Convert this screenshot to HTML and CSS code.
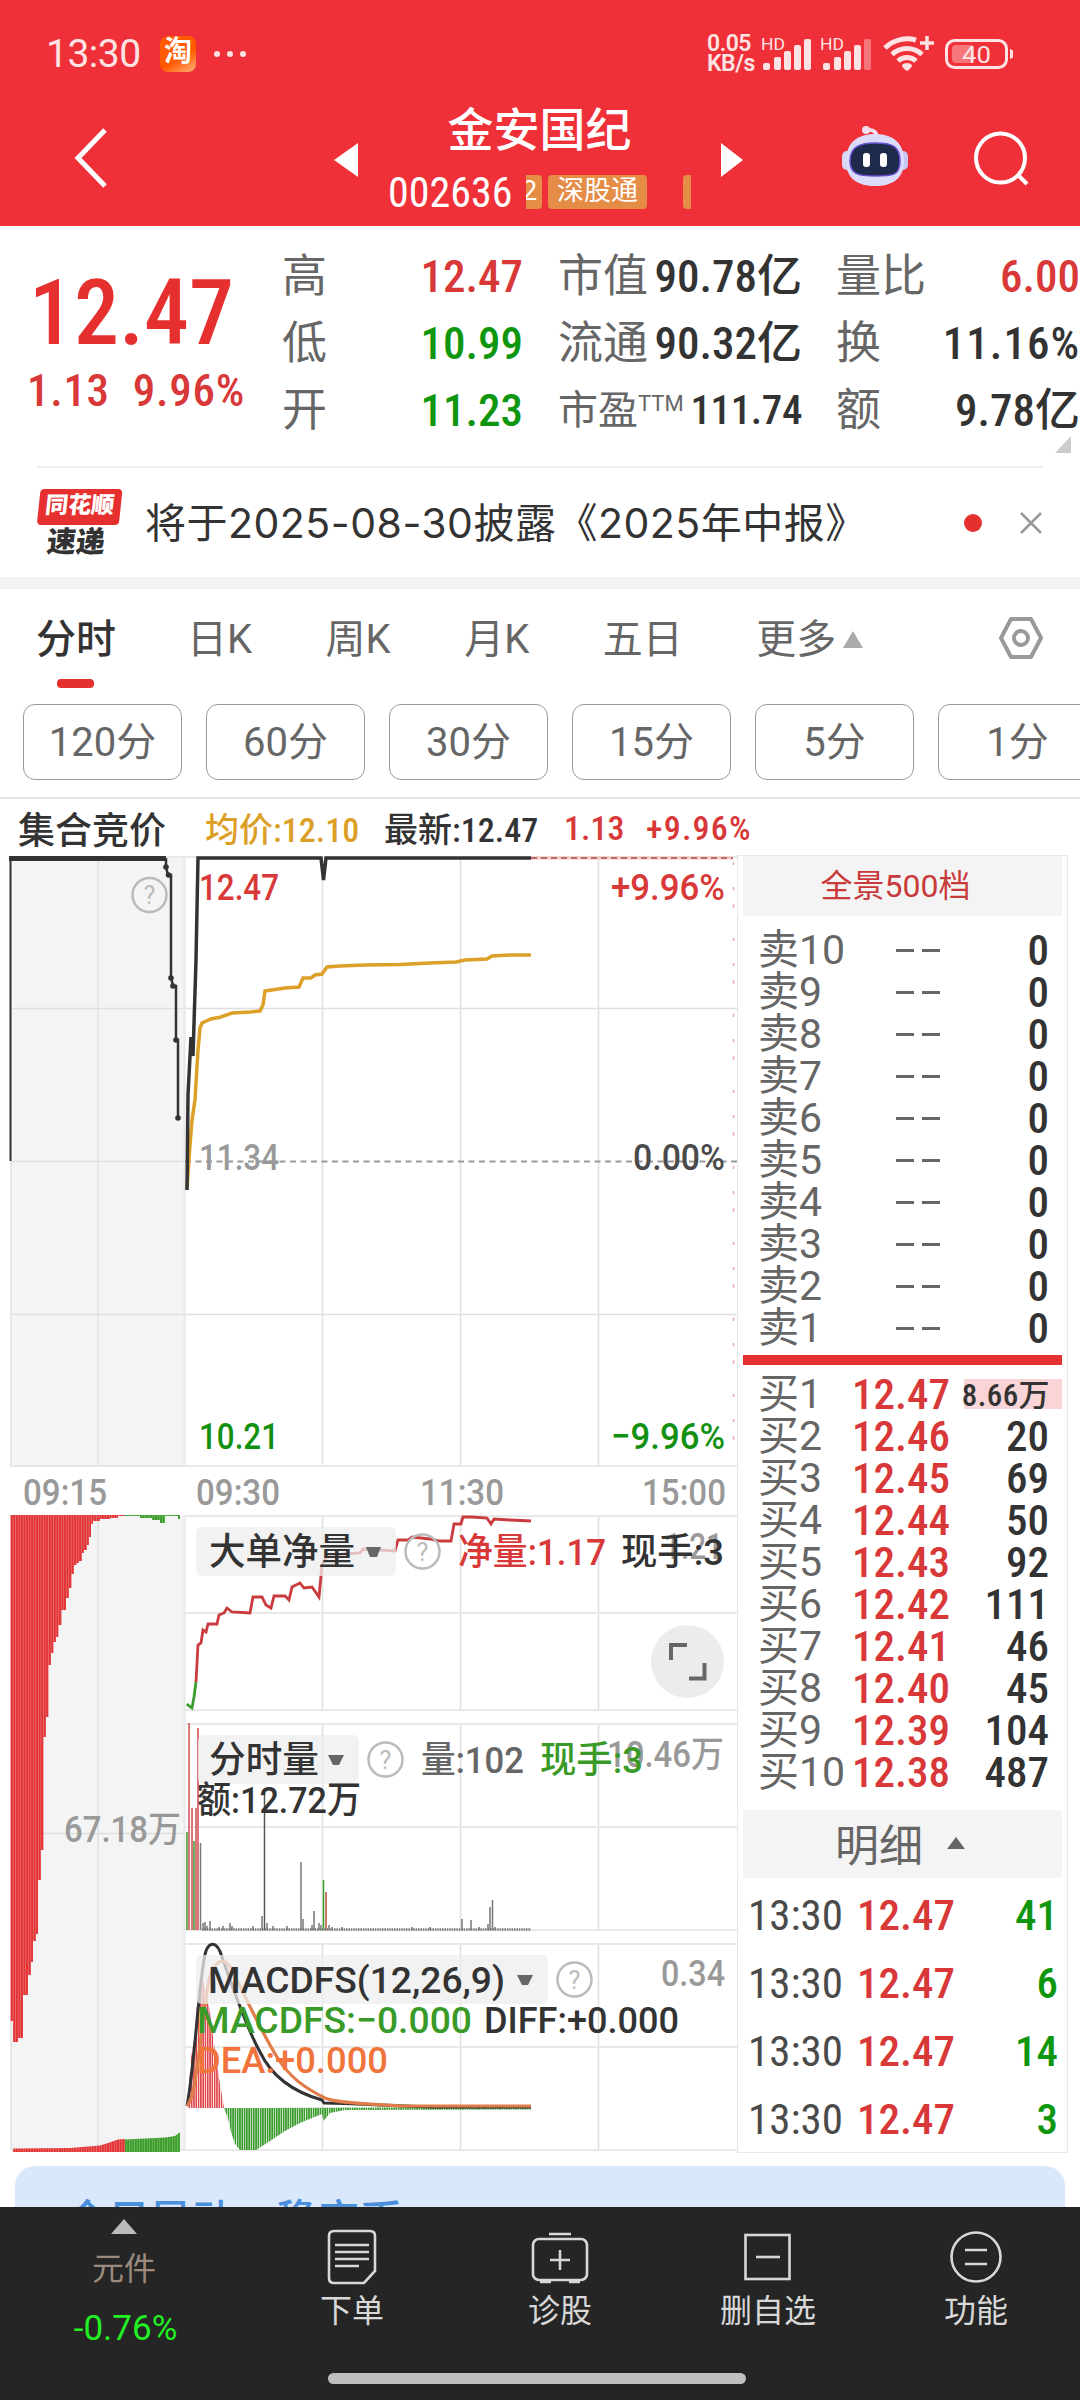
FILE: index.html
```html
<!DOCTYPE html>
<html lang="zh-CN">
<head>
    <meta charset="UTF-8">
    <title>金安国纪 002636</title>
    <link rel="stylesheet" href="styles.css">
</head>
<body>
    <header class="top">
        <div class="status">
            <span class="clock">13:30</span>
            <span class="app-icon">淘</span>
            <span class="more"><i></i><i></i><i></i></span>
            <span class="speed">0.05<br>KB/s</span>
            <svg class="signals" width="254" height="40" viewBox="759 34 254 40">
                <g fill="#fde3e3">
                    <text x="761" y="50" font-size="16" textLength="24" lengthAdjust="spacingAndGlyphs">HD</text>
                    <text x="820" y="50" font-size="16" textLength="24" lengthAdjust="spacingAndGlyphs">HD</text>
                    <rect x="763" y="63" width="7" height="7" rx="2"/>
                    <rect x="774" y="57" width="7" height="13" rx="2"/>
                    <rect x="784" y="51" width="7" height="19" rx="2"/>
                    <rect x="794" y="45" width="7" height="25" rx="2"/>
                    <rect x="804" y="39" width="7" height="31" rx="2"/>
                    <rect x="823" y="63" width="7" height="7" rx="2"/>
                    <rect x="834" y="57" width="7" height="13" rx="2"/>
                    <rect x="844" y="51" width="7" height="19" rx="2"/>
                    <rect x="854" y="45" width="7" height="25" rx="2"/>
                    <rect x="864" y="39" width="7" height="31" rx="2" opacity=".4"/>
                    <path d="M902 65a7 7 0 0 1 10 0q0 3-5 6-5-3-5-6z"/>
                    <rect x="952" y="45" width="22" height="18" rx="4" opacity=".4"/>
                    <path d="M1010 49q4 1 4 5t-4 5z"/>
                    <text x="962" y="63" font-size="24" textLength="29" lengthAdjust="spacingAndGlyphs">40</text>
                </g>
                <g fill="none" stroke="#fde3e3">
                    <path d="M885 48a32 32 0 0 1 31-8M892 54.500a22 22 0 0 1 30 0M898 61a13.500 13.500 0 0 1 18 0" stroke-width="5"/>
                    <path d="M920 43h14M927 36v14" stroke-width="3.500"/>
                    <rect x="946.500" y="40.500" width="60" height="27" rx="8" stroke-width="3"/>
                </g>
            </svg>
        </div>
        <div class="title-bar">
            <svg class="back" width="40" height="64" viewBox="0 0 40 64"><path d="M35 3 8 31l27 28" fill="none" stroke="#fff" stroke-width="5"/></svg>
            <svg class="prev" width="24" height="34" viewBox="0 0 24 34"><path d="M24 0v34L0 17z" fill="#fff"/></svg>
            <div class="stock">
                <h1>金安国纪</h1>
                <div class="code-row">
                    <span class="code num">002636</span>
                    <span class="tag tag-cut">2</span>
                    <span class="tag">深股通</span>
                    <span class="tag tag-next"></span>
                </div>
            </div>
            <svg class="next" width="24" height="34" viewBox="0 0 24 34"><path d="M0 0v34l22-17z" fill="#fff"/></svg>
            <svg class="robot" width="68" height="64" viewBox="0 0 68 64">
                <path d="M24 5q10-1 11 6" fill="none" stroke="#f0dff0" stroke-width="3.500"/>
                <circle cx="24" cy="5" r="4" fill="#f0dff0"/>
                <rect x="0" y="26" width="10" height="19" rx="5" fill="#d9d6f6"/>
                <rect x="56" y="26" width="10" height="19" rx="5" fill="#c9c8f2"/>
                <path d="M33 9c18 0 29 9 29 27S50 61 33 61 4 54 4 36 15 9 33 9z" fill="#dcdcfa"/>
                <path d="M33 18c17 0 25 3 25 18S50 51 33 51 8 49 8 36 16 18 33 18z" fill="#1d2a4a" stroke="#6a4fd0" stroke-width="1.500"/>
                <rect x="21" y="28" width="7" height="14" rx="3" fill="#fff"/>
                <rect x="38" y="28" width="7" height="14" rx="3" fill="#fff"/>
            </svg>
            <svg class="search" width="60" height="60" viewBox="0 0 60 60"><g fill="none" stroke="#fff" stroke-width="4"><circle cx="28.500" cy="29" r="24.500"/><path d="M46 46l9 9"/></g></svg>
        </div>
    </header>

    <section class="quote">
        <div class="price">
            <div class="last num">12.47</div>
            <div class="change num"><span>1.13</span><span>9.96%</span></div>
        </div>
        <dl class="col col-a">
            <div><dt>高</dt><dd class="num red">12.47</dd></div>
            <div><dt>低</dt><dd class="num green">10.99</dd></div>
            <div><dt>开</dt><dd class="num green">11.23</dd></div>
        </dl>
        <dl class="col col-b">
            <div><dt>市值</dt><dd class="num">90.78亿</dd></div>
            <div><dt>流通</dt><dd class="num">90.32亿</dd></div>
            <div class="small"><dt>市盈<sup>TTM</sup></dt><dd class="num">111.74</dd></div>
        </dl>
        <dl class="col col-c">
            <div><dt>量比</dt><dd class="num red">6.00</dd></div>
            <div><dt>换</dt><dd class="num wide">11.16%</dd></div>
            <div><dt>额</dt><dd class="num">9.78亿</dd></div>
        </dl>
        <i class="corner"></i>
    </section>

    <section class="news">
        <div class="news-logo"><b>同花顺</b><em>速递</em></div>
        <p>将于2025-08-30披露《2025年中报》</p>
        <i class="dot"></i>
        <svg width="24" height="24" viewBox="0 0 24 24"><path d="M2 2l20 20M22 2 2 22" stroke="#999" stroke-width="2.500"/></svg>
    </section>

    <nav class="tabs">
        <span class="active">分时</span>
        <span>日K</span>
        <span>周K</span>
        <span>月K</span>
        <span>五日</span>
        <span>更多<i class="up"></i></span>
        <svg width="46" height="44" viewBox="0 0 46 44"><g fill="none" stroke="#999" stroke-width="4"><path d="M13 3h20l10 19-10 19H13L3 22z" stroke-linejoin="round"/><circle cx="23" cy="22" r="7"/></g></svg>
    </nav>
    <div class="periods">
        <span>120分</span><span>60分</span><span>30分</span><span>15分</span><span>5分</span><span>1分</span>
    </div>

    <div class="info">
        <b>集合竞价</b>
        <span class="avg num">均价:12.10</span>
        <span class="now num">最新:12.47</span>
        <span class="diff num">1.13</span>
        <span class="rate num">+9.96%</span>
    </div>

    <main class="board">
        <svg class="charts" width="737" height="1305" viewBox="0 850 737 1305">
            <defs>
                <pattern id="redBars" width="2.530" height="10" patternUnits="userSpaceOnUse"><rect width="2.530" height="10" fill="#e23336"/><rect width=".6" height="10" fill="#ee827e"/></pattern>
                <pattern id="greenBars" width="2.530" height="10" patternUnits="userSpaceOnUse"><rect width="2.530" height="10" fill="#3a9a2c"/><rect width=".7" height="10" fill="#7cc46c"/></pattern>
                <pattern id="redThin" width="2.300" height="10" patternUnits="userSpaceOnUse"><rect width="1.600" height="10" fill="#df474c"/></pattern>
                <pattern id="greenThin" width="2.300" height="10" patternUnits="userSpaceOnUse"><rect width="1.700" height="10" fill="#379a2a"/></pattern>
                <g id="help"><circle r="17" fill="none" stroke="#bbb" stroke-width="2.500"/><text y="9" font-size="25" text-anchor="middle" fill="#bbb">?</text></g>
            </defs>

            <!-- panels and grid -->
            <rect x="11" y="857" width="173" height="609" fill="#f4f4f4"/>
            <rect x="11" y="1516" width="173" height="635" fill="#f4f4f4"/>
            <g fill="none" stroke="#dfdfdf" stroke-width="1.500">
                <path d="M98 857V1466M98 1516V2150M11 1008.500H737M11 1161.500H184M11 1314.500H737M11 1833.500H184"/>
                <path d="M322.500 857V1466M460.500 857V1466M598.500 857V1466M322.500 1516V1710M460.500 1516V1710M598.500 1516V1710M322.500 1724V1930M460.500 1724V1930M598.500 1724V1930M322.500 1944V2150M460.500 1944V2150M598.500 1944V2150"/>
            </g>
            <g fill="none" stroke="#e8e8e8" stroke-width="2">
                <path d="M11 857H737M11 857V1466H737M184.500 857V1466M11 1516V2150M184.500 1516V2150"/>
                <path d="M184 1516H737M184 1613H737M184 1710H737M184 1724H737M184 1827H737M184 1930H737M184 1944H737M184 2047H737M11 2150H737"/>
            </g>

            <!-- call auction -->
            <path d="M10.500 1161V858" stroke="#333" stroke-width="2"/>
            <path d="M9 858.500H166" stroke="#333" stroke-width="5"/>
            <path d="M166 858V867L168 875H171V977L173 986H176V1040H178V1118" fill="none" stroke="#333" stroke-width="2.500"/>
            <g fill="#333"><circle cx="166" cy="867" r="2.800"/><circle cx="168.500" cy="875" r="2.800"/><circle cx="171" cy="978" r="2.800"/><circle cx="173" cy="986" r="2.800"/><circle cx="176" cy="1040" r="2.800"/><circle cx="178" cy="1118" r="2.800"/></g>
            <use href="#help" x="149.500" y="895"/>

            <!-- price line -->
            <path d="M531 858H733" stroke="#f3c4c4" stroke-width="3"/>
            <path d="M531 858H733" stroke="#c06a66" stroke-width="1.800" stroke-dasharray="6 4"/>
            <path d="M733.500 862V1466" stroke="#eba9ab" stroke-width="1.500" stroke-dasharray="3 22 3 14 4 30"/>
            <path d="M185 1161.500H737" stroke="#999" stroke-width="2" stroke-dasharray="6 4.500"/>
            <path d="M187 1188L190 1145 192 1120 195 1100 198 1050 200 1028 202 1023 211 1019 221 1017 232 1013 250 1012 260 1011 263 1005 265 991 285 988 299 987 303 978 311 978 315 975 322 974 327 967 340 966 365 965 400 964.500 430 963 456 962 465 960 487 959 492 956 511 955 531 955" fill="none" stroke="#dc9f28" stroke-width="3.500"/>
            <path d="M187 1190L188 1095 191 1037 193 1056 196 960 198 858H321L323.500 880 326 858H531" fill="none" stroke="#333" stroke-width="3.500"/>
            <g font-size="37" font-weight="500">
                <text x="199" y="900" fill="#d83838" textLength="80" lengthAdjust="spacingAndGlyphs">12.47</text>
                <text x="611" y="900" fill="#d83838" textLength="114" lengthAdjust="spacingAndGlyphs">+9.96%</text>
                <text x="199" y="1170" fill="#999" textLength="80" lengthAdjust="spacingAndGlyphs">11.34</text>
                <text x="633" y="1170" fill="#4a4a4a" textLength="92" lengthAdjust="spacingAndGlyphs">0.00%</text>
                <text x="199" y="1449" fill="#129012" textLength="80" lengthAdjust="spacingAndGlyphs">10.21</text>
                <text x="611" y="1449" fill="#129012" textLength="114" lengthAdjust="spacingAndGlyphs">−9.96%</text>
            </g>
            <g font-size="37" font-weight="500" fill="#999">
                <text x="23" y="1505" textLength="84" lengthAdjust="spacingAndGlyphs">09:15</text>
                <text x="196" y="1505" textLength="84" lengthAdjust="spacingAndGlyphs">09:30</text>
                <text x="420" y="1505" textLength="84" lengthAdjust="spacingAndGlyphs">11:30</text>
                <text x="642" y="1505" textLength="84" lengthAdjust="spacingAndGlyphs">15:00</text>
            </g>

            <!-- auction volume -->
            <path d="M10.500 1515V2021H13V2042H18V2038H23V1995H28V1975H31V1962H33V1941H36V1934H38V1880H41V1850H43.500V1737H46V1717H48.500V1665H51V1653H53.500V1642H56V1637H58.500V1625H61.500V1610H66V1598H69V1588H71.500V1574H74V1565H76.500V1563H79V1561H82V1553H84V1550H87V1545H89V1537H91V1524H93V1521H100V1519H110V1518H118V1516H125V1515Z" fill="url(#redBars)"/>
            <path d="M125 1515V1516H140V1518H152V1520H160V1523H165V1516H178V1519H180V1515Z" fill="url(#greenBars)"/>
            <path d="M13 2152V2148.500L70 2148 100 2145.500 108 2143 118 2139.500 125 2139V2152Z" fill="url(#redBars)"/>
            <path d="M125 2152V2139.500L165 2137.500 175 2136 180 2132V2152Z" fill="url(#greenBars)"/>
            <text x="64" y="1842" font-size="36" font-weight="500" fill="#999" textLength="117" lengthAdjust="spacingAndGlyphs">67.18万</text>

            <!-- net big orders -->
            <path d="M187 1704L189 1706 192 1708 194 1697 196 1682" fill="none" stroke="#3c9a2e" stroke-width="2.800"/>
            <path d="M196 1682L198 1645 201 1643 203 1630 206 1632 208 1624H217L219 1615 224 1613 227 1608 232 1612 250 1613 253 1597H262L266 1605 271 1608 274 1596H285L289 1600 292 1587 300 1583 304 1588 312 1587 319 1597 322 1565 327 1556 345 1554 360 1553 363 1549 395 1551 398 1540H408L412 1537 430 1539 440 1541H451L454 1524H461L463 1517 472 1517 487 1518 491 1524 494 1519 510 1520 531 1521" fill="none" stroke="#c93b3d" stroke-width="2.800"/>
            <rect x="196" y="1527" width="200" height="49" rx="6" class="chip"/>
            <path d="M366 1547h15l-4 10h-7z" fill="#666"/>
            <use href="#help" x="422.500" y="1551.500"/>
            <text x="664" y="1559" font-size="36" font-weight="500" fill="#999" textLength="59" lengthAdjust="spacingAndGlyphs">1.21</text>
            <g font-size="37" font-weight="500">
                <text x="209" y="1565" fill="#333" textLength="146" lengthAdjust="spacingAndGlyphs">大单净量</text>
                <text x="458" y="1565" fill="#d83838" textLength="148" lengthAdjust="spacingAndGlyphs">净量:1.17</text>
                <text x="621" y="1565" fill="#333" textLength="103" lengthAdjust="spacingAndGlyphs">现手:3</text>
            </g>
            <circle cx="687.500" cy="1661.500" r="36.500" fill="#ececec"/>
            <path d="M671 1660V1645H687M704.500 1663V1678.500H689" fill="none" stroke="#666" stroke-width="4"/>

            <!-- volume -->
            <g fill="none" stroke-width="1.500">
                <path d="M189 1930V1723M192 1930V1808M196 1930V1808M198 1930V1728" stroke="#d9686c" stroke-width="1.800"/>
                <path d="M187 1930V1832M194 1930V1841M323.500 1930V1880" stroke="#3c9a2e"/>
                <path d="M326 1930V1892" stroke="#c47a66" stroke-width="2"/>
                <path d="M200.500 1930V1843M203 1930V1923M205 1930V1922M207 1930V1926M210 1930V1921M219 1930V1927M223 1930V1926M230 1930V1923M232 1930V1926M253 1930V1926M262 1930V1916M267 1930V1923M273 1930V1926M287 1930V1926M301 1930V1862M303 1930V1919M312 1930V1925M314 1930V1911M319 1930V1923M321 1930V1925M329 1930V1925M332 1930V1927M342 1930V1927M412 1930V1927M430 1930V1927M462 1930V1919M471 1930V1920M479 1930V1927M488 1930V1924M490 1930V1907M492.500 1930V1900M495 1930V1927" stroke="#777"/>
                <path d="M264.500 1930V1793" stroke="#555"/>
                <path d="M202 1929.500H531" stroke="#777" stroke-width="2.500" stroke-dasharray="1.500 .9"/>
            </g>
            <rect x="198" y="1735" width="161" height="49" rx="6" class="chip"/>
            <path d="M328 1755h16l-5 10h-6z" fill="#666"/>
            <use href="#help" x="385.500" y="1759.500"/>
            <text x="607" y="1767" font-size="36" font-weight="500" fill="#999" textLength="117" lengthAdjust="spacingAndGlyphs">10.46万</text>
            <g font-size="37" font-weight="500">
                <text x="209" y="1773" fill="#333" textLength="110" lengthAdjust="spacingAndGlyphs">分时量</text>
                <text x="421" y="1773" fill="#666" textLength="103" lengthAdjust="spacingAndGlyphs">量:102</text>
                <text x="540" y="1773" fill="#3a9a28" textLength="103" lengthAdjust="spacingAndGlyphs">现手:3</text>
                <text x="197" y="1813" fill="#333" textLength="164" lengthAdjust="spacingAndGlyphs">额:12.72万</text>
            </g>

            <!-- macd -->
            <path d="M188 2108V2097L191 2058 194 2040 198 1992 201 1974 204 1984 207 1997 210 2013 214 2044 219 2078 224 2108Z" fill="url(#redThin)"/>
            <path d="M224 2108L228 2118 231 2132 235 2144 240 2150H256L270 2141 285 2131 300 2123 312 2118 322 2114 323.500 2121 330 2113 345 2110 531 2109.500V2107Z" fill="url(#greenThin)"/>
            <path d="M187 2106C194 2070 198 1995 204 1960C207 1939 217 1940 222 1957C232 1985 245 2025 260 2052C270 2073 290 2091 322 2100L324 2103 345 2103.500 380 2105 430 2107H531" fill="none" stroke="#333" stroke-width="3"/>
            <path d="M187 2106C197 2095 199 2040 208 1985C213 1958 225 1956 232 1970C245 1996 262 2033 277 2057C290 2078 305 2088 325 2098C335 2103 370 2104 400 2106H531" fill="none" stroke="#e07b4a" stroke-width="3.200"/>
            <rect x="196" y="1955" width="352" height="49" rx="6" class="chip"/>
            <path d="M517 1975h16l-5 10h-6z" fill="#666"/>
            <use href="#help" x="574.500" y="1979.500"/>
            <text x="661" y="1986" font-size="36" font-weight="500" fill="#999" textLength="64" lengthAdjust="spacingAndGlyphs">0.34</text>
            <g font-size="37" font-weight="500">
                <text x="208" y="1993" fill="#333" textLength="297" lengthAdjust="spacingAndGlyphs">MACDFS(12,26,9)</text>
                <text x="197" y="2033" fill="#3a9a28" textLength="275" lengthAdjust="spacingAndGlyphs">MACDFS:−0.000</text>
                <text x="484" y="2033" fill="#333" textLength="195" lengthAdjust="spacingAndGlyphs">DIFF:+0.000</text>
                <text x="197" y="2073" fill="#f0743c" textLength="191" lengthAdjust="spacingAndGlyphs">DEA:+0.000</text>
            </g>
        </svg>

        <aside class="book">
            <div class="book-head">全景500档</div>
            <ul class="asks">
                <li><span>卖10</span><i></i><b class="num">0</b></li>
                <li><span>卖9</span><i></i><b class="num">0</b></li>
                <li><span>卖8</span><i></i><b class="num">0</b></li>
                <li><span>卖7</span><i></i><b class="num">0</b></li>
                <li><span>卖6</span><i></i><b class="num">0</b></li>
                <li><span>卖5</span><i></i><b class="num">0</b></li>
                <li><span>卖4</span><i></i><b class="num">0</b></li>
                <li><span>卖3</span><i></i><b class="num">0</b></li>
                <li><span>卖2</span><i></i><b class="num">0</b></li>
                <li><span>卖1</span><i></i><b class="num">0</b></li>
            </ul>
            <ul class="bids">
                <li><span>买1</span><em class="num">12.47</em><b class="num big-lot">8.66万</b></li>
                <li><span>买2</span><em class="num">12.46</em><b class="num">20</b></li>
                <li><span>买3</span><em class="num">12.45</em><b class="num">69</b></li>
                <li><span>买4</span><em class="num">12.44</em><b class="num">50</b></li>
                <li><span>买5</span><em class="num">12.43</em><b class="num">92</b></li>
                <li><span>买6</span><em class="num">12.42</em><b class="num">111</b></li>
                <li><span>买7</span><em class="num">12.41</em><b class="num">46</b></li>
                <li><span>买8</span><em class="num">12.40</em><b class="num">45</b></li>
                <li><span>买9</span><em class="num">12.39</em><b class="num">104</b></li>
                <li><span>买10</span><em class="num">12.38</em><b class="num">487</b></li>
            </ul>
            <div class="detail-head">明细<i class="up"></i></div>
            <ul class="ticks num">
                <li><span>13:30</span><em>12.47</em><b>41</b></li>
                <li><span>13:30</span><em>12.47</em><b>6</b></li>
                <li><span>13:30</span><em>12.47</em><b>14</b></li>
                <li><span>13:30</span><em>12.47</em><b>3</b></li>
            </ul>
        </aside>
    </main>

    <div class="card">今日异动：稳定币</div>

    <footer class="bottom">
        <div class="index-item">
            <i class="up"></i>
            <span>元件</span>
            <strong>-0.76%</strong>
        </div>
        <div class="item">
            <svg width="58" height="58" viewBox="0 0 58 58"><g fill="none" stroke="#d8d8d8" stroke-width="2.600"><path d="M11 3H47q5 0 5 5V43L41 55H11q-5 0-5-5V8q0-5 5-5z"/><path d="M12 17H46M12 24H46M12 31H46M12 38H36"/></g></svg>
            <span>下单</span>
        </div>
        <div class="item">
            <svg width="58" height="58" viewBox="0 0 58 58"><g fill="none" stroke="#d8d8d8" stroke-width="2.600"><rect x="2" y="11" width="54" height="41" rx="6"/><path d="M18 6H40M29 22V42M19 32H39M9 54H20M38 54H49"/></g></svg>
            <span>诊股</span>
        </div>
        <div class="item">
            <svg width="58" height="58" viewBox="0 0 58 58"><g fill="none" stroke="#d8d8d8" stroke-width="2.600"><rect x="6.500" y="7" width="44" height="44"/><path d="M17 29H41"/></g></svg>
            <span>删自选</span>
        </div>
        <div class="item">
            <svg width="58" height="58" viewBox="0 0 58 58"><g fill="none" stroke="#d8d8d8" stroke-width="2.600"><circle cx="29" cy="29" r="24.500"/><path d="M18 22H40M18 36H40"/></g></svg>
            <span>功能</span>
        </div>
        <i class="home-bar"></i>
    </footer>
</body>
</html>
```
FILE: styles.css
```css
* {
    box-sizing: border-box;
    margin: 0;
    padding: 0;
}

body {
    width: 1080px;
    height: 2400px;
    overflow: hidden;
    position: relative;
    background: #fff;
    color: #333;
    font-family: Roboto, "Noto Sans CJK SC", sans-serif;
}

ul {
    list-style: none;
}

i, em {
    font-style: normal;
}

b {
    font-weight: 500;
}

svg {
    display: block;
    flex: none;
}

.num {
    font-family: Roboto, "Noto Sans CJK SC", sans-serif;
    font-weight: 500;
    font-stretch: 86%;
}

.red {
    color: #d83838;
}

.green {
    color: #0f960f;
}

.up {
    display: inline-block;
    border: 10px solid transparent;
    border-top: 0;
    border-bottom: 17px solid #aaa;
}

/* header */
.top {
    height: 226px;
    background: #f03038;
    color: #fff;
}

.status {
    display: flex;
    align-items: center;
    height: 108px;
    padding: 0 67px 0 46px;
    color: #fde3e3;
}

.clock {
    width: 114px;
    font-size: 39px;
    letter-spacing: -0.5px;
}

.app-icon {
    width: 36px;
    height: 36px;
    border-radius: 8px;
    background: linear-gradient(150deg, #ff5a00 60%, #ffb37a);
    color: #fff;
    font-size: 28px;
    font-weight: 700;
    line-height: 32px;
    text-align: center;
}

.more {
    display: flex;
    gap: 7px;
    margin-left: 18px;
}

.more i {
    width: 6px;
    height: 6px;
    border-radius: 50%;
    background: #fde3e3;
}

.speed {
    margin-left: auto;
    width: 52px;
    font-size: 23px;
    font-weight: 600;
    letter-spacing: -0.5px;
    line-height: 20px;
}

.title-bar {
    display: flex;
    align-items: flex-start;
    height: 118px;
}

.back {
    margin: 19px 0 0 70px;
}

.prev {
    margin: 35px 0 0 224px;
}

.stock {
    width: 363px;
    padding-top: 1px;
    text-align: center;
}

.stock h1 {
    height: 65px;
    font-size: 46px;
    font-weight: 500;
    line-height: 43px;
}

.code-row {
    display: flex;
    align-items: center;
    height: 36px;
    padding-left: 30px;
}

.code {
    width: 138px;
    text-align: left;
    font-size: 42px;
    font-weight: 400;
}

.tag {
    width: 99px;
    height: 34px;
    border-radius: 4px;
    background: #e58c46;
    font-size: 27px;
    line-height: 32px;
}

.tag-cut {
    width: 16px;
    margin-right: 6px;
    border-radius: 0 4px 4px 0;
    text-align: left;
    text-indent: -4px;
    overflow: hidden;
}

.tag-next {
    width: 8px;
    margin-left: 36px;
    border-radius: 4px 0 0 4px;
}

.next {
    margin-top: 35px;
}

.robot {
    margin: 17px 0 0 97px;
}

.search {
    margin: 21px 0 0 62px;
}

/* quote */
.quote {
    position: relative;
    display: flex;
    height: 242px;
    padding-top: 17px;
}

.quote::after {
    content: "";
    position: absolute;
    left: 37px;
    right: 37px;
    bottom: 0;
    height: 2px;
    background: #eee;
}

.price {
    width: 283px;
    color: #e63030;
}

.last {
    padding: 17px 0 0 29px;
    font-size: 90px;
    line-height: 108px;
}

.change {
    display: flex;
    gap: 23px;
    padding: 0 0 0 27px;
    font-size: 45px;
    line-height: 45px;
    letter-spacing: 0.7px;
    color: #d83838;
}

.col > div {
    display: flex;
    justify-content: space-between;
    height: 67px;
    line-height: 67px;
    font-size: 45px;
    white-space: nowrap;
}

.col dt {
    color: #666;
    margin-left: -1px;
}

.col dd {
    font-size: 45px;
}

.col .wide {
    letter-spacing: 1px;
}

.col-a {
    width: 240px;
    margin-right: 36px;
}

.col-b {
    width: 243px;
    margin-right: 35px;
}

.col-c {
    width: 243px;
}

.col .small dt {
    font-size: 40px;
}

.col .small dd {
    font-size: 41px;
    letter-spacing: -0.4px;
}

.small sup {
    font-size: 22px;
    line-height: 0;
    vertical-align: 13px;
}

.corner {
    position: absolute;
    right: 9px;
    bottom: 15px;
    border-left: 16px solid transparent;
    border-bottom: 17px solid #ccc;
}

/* news */
.news {
    display: flex;
    align-items: center;
    height: 121px;
    padding: 0 37px;
    border-bottom: 12px solid #f4f4f4;
}

.news-logo {
    width: 82px;
    margin-right: 26px;
    text-align: center;
    line-height: 1;
    transform: skewX(-6deg);
}

.news-logo b {
    display: block;
    height: 36px;
    border-radius: 4px;
    background: #e63030;
    color: #fff;
    font-size: 23px;
    font-weight: 900;
    line-height: 33px;
}

.news-logo em {
    display: block;
    margin-top: 3px;
    font-size: 29px;
    font-weight: 900;
}

.news p {
    width: 819px;
    margin-top: -5px;
    font-family: Inter, "Noto Sans CJK SC", sans-serif;
    font-size: 41px;
    letter-spacing: 0.5px;
    white-space: nowrap;
}

.news .dot {
    width: 18px;
    height: 18px;
    margin-right: 37px;
    border-radius: 50%;
    background: #e63030;
}

/* tabs */
.tabs {
    display: flex;
    align-items: center;
    height: 98px;
    padding: 0 36px 5px;
    font-size: 40px;
    color: #666;
}

.tabs span {
    position: relative;
    white-space: nowrap;
    margin-right: 73.5px;
}

.tabs svg {
    margin: 4px 0 0 auto;
}

.tabs span:last-of-type {
    margin-right: 0;
}

.tabs .up {
    margin: 0 0 5px 7px;
}

.tabs .active {
    color: #333;
    font-weight: 500;
    margin-right: 71px;
}

.tabs .active::after {
    content: "";
    position: absolute;
    left: 21px;
    bottom: -23px;
    width: 37px;
    height: 9px;
    border-radius: 4px;
    background: #e63030;
}

.periods {
    display: flex;
    gap: 24px;
    height: 112px;
    padding: 17px 0 0 23px;
    border-bottom: 2px solid #e6e6e6;
    overflow: hidden;
}

.periods span {
    flex: none;
    width: 159px;
    height: 76px;
    border: 1.5px solid #999;
    border-radius: 12px;
    color: #666;
    font-size: 40px;
    line-height: 75px;
    text-align: center;
}

.info {
    display: flex;
    align-items: center;
    height: 51px;
    padding: 6px 0 0 18px;
    font-size: 34px;
    white-space: nowrap;
}

.info b {
    width: 187px;
    font-size: 37px;
}

.avg {
    width: 179px;
    color: #dc9f28;
}

.now {
    width: 180px;
}

.diff, .rate {
    width: 82px;
    color: #d83838;
}

.rate {
    letter-spacing: 1.2px;
}

/* chart board */
.board {
    display: flex;
    height: 1305px;
}

.charts {
    font-family: Roboto, "Noto Sans CJK SC", sans-serif;
}

.chip {
    fill: #eee;
    fill-opacity: .75;
}

.book {
    width: 331px;
    height: 1298px;
    margin-top: 5px;
    padding: 0 5px;
    border: 1px solid #e8e8e8;
}

.book-head {
    height: 60px;
    background: #f4f4f4;
    color: #c93a3a;
    font-size: 32px;
    line-height: 60px;
    text-align: center;
    padding-right: 14px;
}

.book li {
    display: flex;
    align-items: center;
    height: 42px;
    padding: 0 13px 0 15px;
    font-size: 43px;
    line-height: 42px;
    white-space: nowrap;
}

.book li span {
    width: 138px;
    font-size: 41px;
    color: #666;
}

.book li em {
    color: #d83838;
}

.book li b {
    margin-left: auto;
}

.asks {
    height: 449px;
    padding-top: 13px;
    border-bottom: 10px solid #e63030;
}

.asks i {
    width: 44px;
    height: 3px;
    background: linear-gradient(90deg, #666 18px, transparent 18px, transparent 26px, #666 26px);
}

.bids {
    height: 445px;
    padding-top: 8px;
}

.book .bids span {
    width: 94px;
}

.book li .big-lot {
    display: flex;
    justify-content: flex-end;
    width: 98px;
    height: 30px;
    margin-right: -13px;
    padding-right: 12px;
    background: #f9d5d7;
    font-size: 31px;
    line-height: 34px;
    letter-spacing: 0.4px;
}

.detail-head {
    display: flex;
    align-items: center;
    height: 68px;
    padding: 0 0 3px 92px;
    background: #f4f4f4;
    color: #666;
    font-size: 44px;
}

.detail-head .up {
    margin-left: 24px;
    border-width: 0 9px 12px;
    border-bottom-color: #666;
}

.ticks {
    padding-top: 3px;
}

.book .ticks li {
    height: 68px;
    padding: 0 4px 0 5px;
}

.book .ticks span {
    width: 109px;
    font-size: 43px;
    font-weight: 450;
    color: #4a4a4a;
}

.book .ticks b {
    color: #0f960f;
}

.card {
    height: 100px;
    margin: 11px 15px 0;
    padding: 20px 0 0 51px;
    border-radius: 20px;
    background: #dae8fb;
    color: #4a8fdc;
    font-size: 42px;
    font-weight: 500;
}

/* bottom bar */
.bottom {
    position: absolute;
    left: 0;
    bottom: 0;
    display: flex;
    width: 1080px;
    height: 193px;
    background: #252525;
    color: #d8d8d8;
    font-size: 32px;
}

.index-item {
    display: flex;
    flex-direction: column;
    align-items: center;
    width: 248px;
    padding-top: 12px;
    line-height: 40px;
}

.index-item .up {
    border-width: 0 13px 15px;
    border-bottom-color: #bbb;
}

.index-item span {
    margin: 15px 0 20px;
    color: #9b8b7e;
}

.index-item strong {
    margin-left: 3px;
    font-size: 35px;
    font-weight: 400;
    color: #22f022;
}

.item {
    display: flex;
    flex-direction: column;
    align-items: center;
    width: 208px;
    padding-top: 21px;
    line-height: 50px;
}

.home-bar {
    position: absolute;
    left: 328px;
    bottom: 16px;
    width: 418px;
    height: 11px;
    border-radius: 6px;
    background: #bfbfbf;
}
```
